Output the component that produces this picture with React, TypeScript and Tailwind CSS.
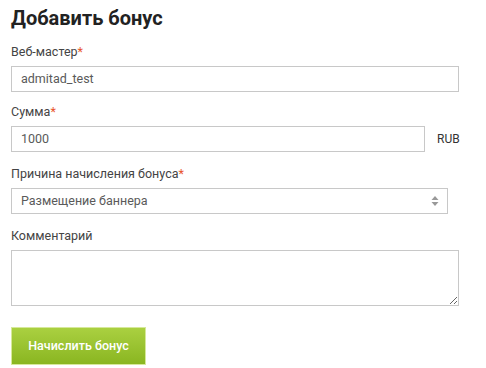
import React from "react";

const Label = ({ text, required }: { text: string; required?: boolean }) => (
  <div className="text-[12.5px] leading-[16px] text-[#444] mb-[6px]">
    {text}
    {required && <span className="text-[#e8542c]">*</span>}
  </div>
);

export default function App() {
  return (
    <div
      className="w-[486px] h-[368px] bg-white pl-[11px] pt-[4px]"
      style={{ fontFamily: "Roboto, 'Liberation Sans', sans-serif" }}
    >
      <h1 className="text-[20px] leading-[28px] font-bold text-[#222] mb-[12px]">
        Добавить бонус
      </h1>

      {/* web-master */}
      <Label text="Веб-мастер" required />
      <div className="w-[448px] h-[26px] border border-[#c8c8c8] px-[9px] flex items-center text-[12.5px] text-[#5a5a5a]">
        admitad_test
      </div>

      <div className="mt-[12px]">
        <Label text="Сумма" required />
        <div className="flex items-center">
          <div className="w-[414px] h-[26px] border border-[#c8c8c8] px-[9px] flex items-center text-[12.5px] text-[#5a5a5a]">
            1000
          </div>
          <span className="ml-[12px] text-[12px] text-[#333]">RUB</span>
        </div>
      </div>

      <div className="mt-[14px]">
        <Label text="Причина начисления бонуса" required />
        <div className="w-[437px] h-[26px] border border-[#c8c8c8] pl-[9px] pr-[8px] flex items-center justify-between text-[12.5px] text-[#5a5a5a]">
          <span>Размещение баннера</span>
          <svg width="8" height="12" viewBox="0 0 8 12">
            <path d="M4 1 L7.5 5 H0.5 Z" fill="#999" />
            <path d="M4 11 L7.5 7 H0.5 Z" fill="#999" />
          </svg>
        </div>
      </div>

      <div className="mt-[14px]">
        <Label text="Комментарий" />
        <textarea className="block w-[448px] h-[56px] border border-[#c8c8c8] resize-y outline-none" />
      </div>

      <button className="mt-[21px] w-[135px] h-[38px] border border-[#d6e99a] bg-gradient-to-b from-[#aad040] to-[#8ab620] text-white text-[12.5px] font-medium">
        Начислить бонус
      </button>
    </div>
  );
}
